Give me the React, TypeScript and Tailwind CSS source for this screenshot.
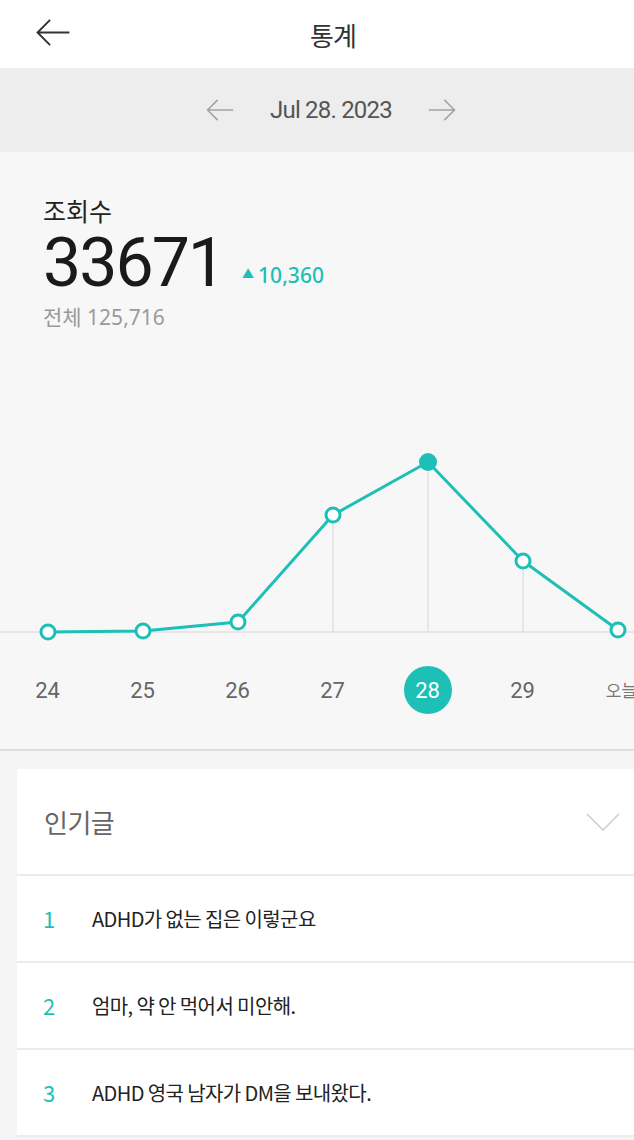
import React from "react";

const TEAL = "#1dbfb6";

const DAYS = ["24", "25", "26", "27", "28", "29", "오늘"];
const VALUES = [300, 299, 290, 183, 130, 229, 298];
const SELECTED = 4;

function ArrowLeft({ className, stroke }: { className?: string; stroke: string }) {
  return (
    <svg viewBox="0 0 36 30" className={className} fill="none" stroke={stroke} strokeWidth={2}>
      <path d="M35 15H2M15 2L2 15l13 13" />
    </svg>
  );
}

function Chart() {
  const xs = DAYS.map((_, i) => 48 + 95 * i);
  const points = xs.map((x, i) => `${x},${VALUES[i]}`).join(" ");
  return (
    <svg width={634} height={318} className="block">
      <line x1={0} y1={300} x2={634} y2={300} stroke="#e6e6e6" strokeWidth={2} />
      {xs.map((x, i) =>
        VALUES[i] < 260 ? (
          <line key={i} x1={x} y1={VALUES[i]} x2={x} y2={300} stroke="#e2e2e2" strokeWidth={1.5} />
        ) : null
      )}
      <polyline points={points} fill="none" stroke={TEAL} strokeWidth={3} strokeLinejoin="round" />
      {xs.map((x, i) =>
        i === SELECTED ? (
          <circle key={i} cx={x} cy={VALUES[i]} r={9} fill={TEAL} />
        ) : (
          <circle key={i} cx={x} cy={VALUES[i]} r={7} fill="#fff" stroke={TEAL} strokeWidth={3} />
        )
      )}
    </svg>
  );
}

const POSTS = [
  "ADHD가 없는 집은 이렇군요",
  "엄마, 약 안 먹어서 미안해.",
  "ADHD 영국 남자가 DM을 보내왔다.",
];

export default function App() {
  return (
    <div
      className="w-[634px] h-[1140px] overflow-hidden bg-[#f5f5f5]"
      style={{ fontFamily: '"Noto Sans", "Noto Sans CJK KR", sans-serif' }}
    >
      <header className="relative flex h-[68px] items-center justify-center bg-white">
        <ArrowLeft className="absolute left-[35px] top-[18px] h-[29px] w-[36px]" stroke="#333" />
        <h1
          className="ml-[32px] text-[26px] tracking-[-1px] text-[#333]"
          style={{ fontFamily: '"Noto Sans CJK KR", sans-serif' }}
        >
          통계
        </h1>
      </header>

      <div className="flex h-[84px] items-center justify-center gap-[36px] bg-[#ededed] pl-[28px]">
        <ArrowLeft className="h-[24px] w-[28px]" stroke="#a3a3a3" />
        <span className="text-[24px] tracking-[-0.8px] text-[#555]" style={{ fontFamily: "Roboto, sans-serif" }}>
          Jul 28. 2023
        </span>
        <ArrowLeft className="h-[24px] w-[28px] rotate-180" stroke="#a3a3a3" />
      </div>

      <section className="overflow-hidden border-b-2 border-[#dedede] bg-[#f7f7f7] pt-[44px] pb-[35px]">
        <div className="px-[43px]">
          <p className="text-[25px] leading-[28px] text-[#222]" style={{ fontFamily: '"Noto Sans CJK KR", sans-serif' }}>
            조회수
          </p>
          <div className="flex items-end gap-[18px]">
            <span
              className="text-[68px] leading-[78px] tracking-[-2px] text-[#1a1a1a]"
              style={{ fontFamily: "Roboto, sans-serif" }}
            >
              33671
            </span>
            <span className="mb-[11px] flex items-center gap-[4px] text-[21px] font-medium" style={{ color: TEAL }}>
              <span className="text-[12px]">▲</span>10,360
            </span>
          </div>
          <p className="text-[21px] leading-[30px] text-[#9a9a9a]">전체 125,716</p>
        </div>

        <Chart />

        <div className="mt-[16px] flex h-[48px] w-[634px]">
          {DAYS.map((d, i) => (
            <div key={d} className="flex w-[95px] shrink-0 items-center justify-center">
              {i === SELECTED ? (
                <span
                  className="flex h-[48px] w-[48px] items-center justify-center rounded-full text-[22px] text-white"
                  style={{ backgroundColor: TEAL, fontFamily: "Roboto, sans-serif" }}
                >
                  {d}
                </span>
              ) : (
                <span
                  className={i === 6 ? "ml-[8px] text-[17px] text-[#777]" : "text-[22px] text-[#666]"}
                  style={{ fontFamily: i === 6 ? '"Noto Sans CJK KR", sans-serif' : "Roboto, sans-serif" }}
                >
                  {d}
                </span>
              )}
            </div>
          ))}
        </div>
      </section>

      <div className="pt-[18px] pl-[17px]">
        <div className="bg-white" style={{ fontFamily: '"Noto Sans CJK KR", sans-serif' }}>
          <div className="flex h-[107px] items-center justify-between border-b-2 border-[#ececec] pl-[27px] pr-[14px]">
            <span className="text-[26px] tracking-[-0.5px] text-[#666]">인기글</span>
            <svg viewBox="0 0 34 18" className="h-[18px] w-[34px]" fill="none" stroke="#d0d0d0" strokeWidth={1.6}>
              <path d="M1 1l16 16L33 1" />
            </svg>
          </div>
          {POSTS.map((p, i) => (
            <div key={p} className="flex h-[87px] items-center border-b-2 border-[#ececec] pl-[26px]">
              <span className="w-[49px] text-[22px]" style={{ color: TEAL }}>
                {i + 1}
              </span>
              <span className="text-[20px] tracking-[-0.6px] text-[#222]">{p}</span>
            </div>
          ))}
        </div>
      </div>
    </div>
  );
}
